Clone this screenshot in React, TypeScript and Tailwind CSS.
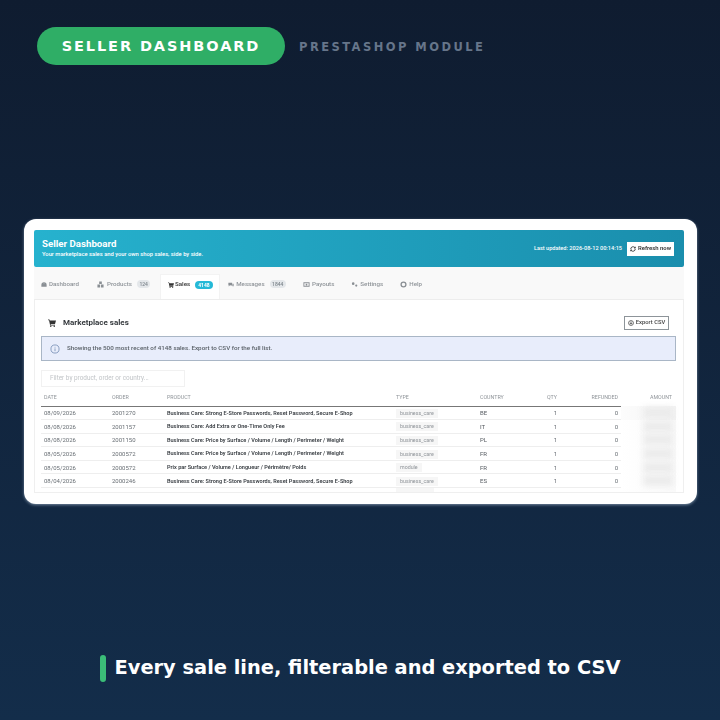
import React from "react";

const rows = [
  ["08/09/2026", "2001270", "Business Care: Strong E-Store Passwords, Reset Password, Secure E-Shop", "business_care", "BE"],
  ["08/08/2026", "2001157", "Business Care: Add Extra or One-Time Only Fee", "business_care", "IT"],
  ["08/08/2026", "2001150", "Business Care: Price by Surface / Volume / Length / Perimeter / Weight", "business_care", "PL"],
  ["08/05/2026", "2000572", "Business Care: Price by Surface / Volume / Length / Perimeter / Weight", "business_care", "FR"],
  ["08/05/2026", "2000572", "Prix par Surface / Volume / Longueur / Périmètre/ Poids", "module", "FR"],
  ["08/04/2026", "2000246", "Business Care: Strong E-Store Passwords, Reset Password, Secure E-Shop", "business_care", "ES"],
];

function Cart({ size = 8, color = "#333" }: { size?: number; color?: string }) {
  return (
    <svg width={size} height={size} viewBox="0 0 16 16" fill={color} className="shrink-0">
      <path d="M0 1h3l.6 2H16l-2 7H5.2l.4 1.5H14V13H4.3L2 2.5H0z" />
      <circle cx="5.5" cy="14.5" r="1.5" />
      <circle cx="12.5" cy="14.5" r="1.5" />
    </svg>
  );
}

function Tab({ icon, label, badge, active }: { icon: React.ReactNode; label: string; badge?: string; active?: boolean }) {
  return (
    <div
      className={
        active
          ? "flex items-center gap-[1px] h-[25px] pb-[5px] pl-[7px] pr-[6px] ml-[1px] bg-white border-x border-t border-[#f3f3f3] text-[#444] font-semibold"
          : "flex items-center gap-[2px] h-[25px] pb-[5px] px-[8.5px] text-[#8f9499] font-medium"
      }
    >
      {icon}
      <span className="leading-[9px]">{label}</span>
      {badge && (
        <span
          className={
            active
              ? "ml-[4px] px-[3px] h-[8px] leading-[8px] rounded-full bg-[#25b9d7] text-white text-[5px] font-bold"
              : "ml-[3px] px-[2.5px] h-[8px] leading-[8px] rounded-full bg-[#e4e7ea] text-[#7d858c] text-[5px]"
          }
        >
          {badge}
        </span>
      )}
    </div>
  );
}

const icon = (d: string, w = 6) => (
  <svg width={w} height="7" viewBox="0 0 16 16" fill="#8a8f94" className="shrink-0">
    <path d={d} fillRule="evenodd" />
  </svg>
);

export default function App() {
  return (
    <div className="h-[720px] w-[720px] overflow-hidden flex flex-col bg-gradient-to-b from-[#0f1c30] to-[#132d4a] font-['DejaVu_Sans',sans-serif]">
      <div className="flex items-center mt-[27px] ml-[37px] gap-[14px]">
        <div className="h-[38px] w-[248px] rounded-full bg-[#2fae66] flex items-center justify-center pt-[1px] text-white text-[14.5px] font-bold tracking-[1.9px] whitespace-nowrap">
          SELLER DASHBOARD
        </div>
        <div className="text-[#66758a] text-[11.5px] font-bold tracking-[2.45px] whitespace-nowrap mt-[4px]">
          PRESTASHOP MODULE
        </div>
      </div>

      <div className="mt-[154px] ml-[24px] w-[673px] h-[285px] rounded-[12px] bg-white pl-[10px] pr-[13px] pt-[11px] pb-[11px] shadow-[0_1px_3px_rgba(180,200,220,0.6)] font-['Roboto',sans-serif] blur-[0.4px]">
        <div className="h-full flex flex-col">
          <div className="h-[37px] shrink-0 rounded-[2px] bg-gradient-to-r from-[#26b2ce] to-[#1a8ead] flex items-center justify-between pl-[8px] pr-[10px]">
            <div className="text-white">
              <div className="text-[9.7px] leading-[12px] font-bold">Seller Dashboard</div>
              <div className="text-[5.8px] leading-[9px] font-medium">Your marketplace sales and your own shop sales, side by side.</div>
            </div>
            <div className="flex items-center gap-[5px]">
              <span className="text-white text-[5.6px] font-medium">Last updated: 2026-08-12 00:14:15</span>
              <div className="h-[14px] w-[47px] bg-white flex items-center justify-center gap-[2px] text-[5.9px] font-semibold text-[#333]">
                <svg width="6" height="6" viewBox="0 0 24 24" fill="none" stroke="#333" strokeWidth="3.5">
                  <path d="M21 12a9 9 0 0 1-15.5 6.2L3 16M3 12a9 9 0 0 1 15.5-6.2L21 8M21 3v5h-5M3 21v-5h5" />
                </svg>
                Refresh now
              </div>
            </div>
          </div>

          <div className="h-[33px] shrink-0 bg-[#f9f9f9] flex items-end text-[6.2px] border-b border-[#ededed]">
            <div className="-ml-[1.5px]">
              <Tab label="Dashboard" icon={icon("M8 2a7 7 0 0 0-7 7v5h14V9a7 7 0 0 0-7-7zm0 3a1 1 0 1 1 0 2 1 1 0 0 1 0-2z")} />
            </div>
            <Tab label="Products" badge="124" icon={icon("M5 1h6v6H5zM1 8h6v7H1zM9 8h6v7H9z", 9)} />
            <Tab active label="Sales" badge="4148" icon={<Cart size={6} />} />
            <Tab label="Messages" badge="1844" icon={icon("M1 3h10v7H5l-3 3v-3H1zM12 6h3v6h-1v2l-2-2H7v-1h5z", 6)} />
            <Tab label="Payouts" icon={icon("M1 3h14v10H1zm2 2v6h10V5zm5 1a2 2 0 1 1 0 4 2 2 0 0 1 0-4z", 7)} />
            <Tab label="Settings" icon={icon("M5 3a3 3 0 1 1 0 6 3 3 0 0 1 0-6zM12 8a2.5 2.5 0 1 1 0 5 2.5 2.5 0 0 1 0-5z", 7)} />
            <Tab label="Help" icon={icon("M8 1a7 7 0 1 0 0 14A7 7 0 0 0 8 1zm0 3a4 4 0 1 1 0 8 4 4 0 0 1 0-8z", 7)} />
          </div>

          <div className="flex-1 min-h-0 overflow-hidden border-x border-b border-[#efefef] pl-[6px] pr-[7px] pt-[15px]">
            <div className="flex items-center justify-between pl-[7px] pr-[7px] h-[15px]">
              <div className="flex items-center gap-[7px] text-[8px] font-bold text-[#363a3e]">
                <Cart size={8} />
                Marketplace sales
              </div>
              <div className="h-[14px] w-[45px] border border-[#8d9499] flex items-center justify-center gap-[2px] text-[5.8px] font-medium text-[#444]">
                <svg width="6" height="6" viewBox="0 0 16 16" fill="none" stroke="#444" strokeWidth="2">
                  <circle cx="8" cy="8" r="6.5" />
                  <path d="M8 4v7M5 8l3 3 3-3" />
                </svg>
                Export CSV
              </div>
            </div>

            <div className="mt-[6px] h-[25px] bg-[#e8edfb] border border-[#a9b6c6] flex items-center pl-[8px] gap-[7px] text-[6.25px] font-medium text-[#5a6168]">
              <svg width="10" height="10" viewBox="0 0 16 16" fill="none" stroke="#6b86ad" strokeWidth="1.2">
                <circle cx="8" cy="8" r="6.5" />
                <path d="M8 7v4.5M8 4.5v1.2" />
              </svg>
              Showing the 500 most recent of 4148 sales. Export to CSV for the full list.
            </div>

            <div className="mt-[9px] h-[17px] w-[144px] border border-[#f1f1f1] pl-[8px] flex items-center text-[6.4px] text-[#c2c5c8]">
              Filter by product, order or country...
            </div>

            <table className="mt-[3px] w-full table-fixed border-collapse text-[6px]">
              <colgroup>
                <col className="w-[68px]" />
                <col className="w-[55px]" />
                <col className="w-[229px]" />
                <col className="w-[84px]" />
                <col className="w-[47px]" />
                <col className="w-[36px]" />
                <col className="w-[61px]" />
                <col />
              </colgroup>
              <thead>
                <tr className="h-[16px] text-[5.3px] text-[#8f9499] [&>th:not(:last-child)]:border-b-[1.5px] [&>th:not(:last-child)]:border-[#777]">
                  <th className="text-left font-normal pl-[3px]">DATE</th>
                  <th className="text-left font-normal pl-[3px]">ORDER</th>
                  <th className="text-left font-normal pl-[3px]">PRODUCT</th>
                  <th className="text-left font-normal pl-[3px]">TYPE</th>
                  <th className="text-left font-normal pl-[3px]">COUNTRY</th>
                  <th className="text-right font-normal pr-[3px]">QTY</th>
                  <th className="text-right font-normal pr-[3px]">REFUNDED</th>
                  <th className="text-right font-normal pr-[4px]">AMOUNT</th>
                </tr>
              </thead>
              <tbody>
                {rows.map((r, i) => (
                  <tr key={i} className="h-[13.6px] [&>td:not(:last-child)]:border-b [&>td:not(:last-child)]:border-[#eeeeee]">
                    <td className="pl-[3px] text-[#686e74]">{r[0]}</td>
                    <td className="pl-[3px] text-[#686e74]">{r[1]}</td>
                    <td className="pl-[3px] font-semibold text-[#3c4146] whitespace-nowrap text-[5.55px]">{r[2]}</td>
                    <td className="pl-[3px]">
                      <span className="inline-block bg-[#f6f6f6] px-[4px] leading-[9px] text-[5.3px] text-[#8f9499]">{r[3]}</span>
                    </td>
                    <td className="pl-[3px] text-[#555a60]">{r[4]}</td>
                    <td className="text-right pr-[3px] text-[#686e74]">1</td>
                    <td className="text-right pr-[3px] text-[#686e74]">0</td>
                    <td className={i === 0 ? "bg-gradient-to-r from-[#fcfcfc] to-[#f3f3f3]" : "bg-gradient-to-r from-white to-[#fafafa]"}>
                      <div className="h-[11px] ml-[22px] mr-[3px] bg-[#ebebeb] blur-[3px]" />
                    </td>
                  </tr>
                ))}
                <tr className="h-[13.6px]">
                  <td />
                  <td />
                  <td />
                  <td className="pl-[3px] align-top">
                    <div className="w-[38px] h-[9px] bg-[#f6f6f6]" />
                  </td>
                  <td />
                  <td />
                  <td />
                  <td className="bg-gradient-to-r from-white to-[#fafafa]" />
                </tr>
              </tbody>
            </table>
          </div>
        </div>
      </div>

      <div className="mt-[150px] flex items-center justify-center gap-[9px]">
        <div className="w-[6px] h-[27px] rounded-full bg-[#3bbd78]" />
        <div className="text-white text-[19.4px] font-bold leading-[28px] whitespace-nowrap">Every sale line, filterable and exported to CSV</div>
      </div>
    </div>
  );
}
